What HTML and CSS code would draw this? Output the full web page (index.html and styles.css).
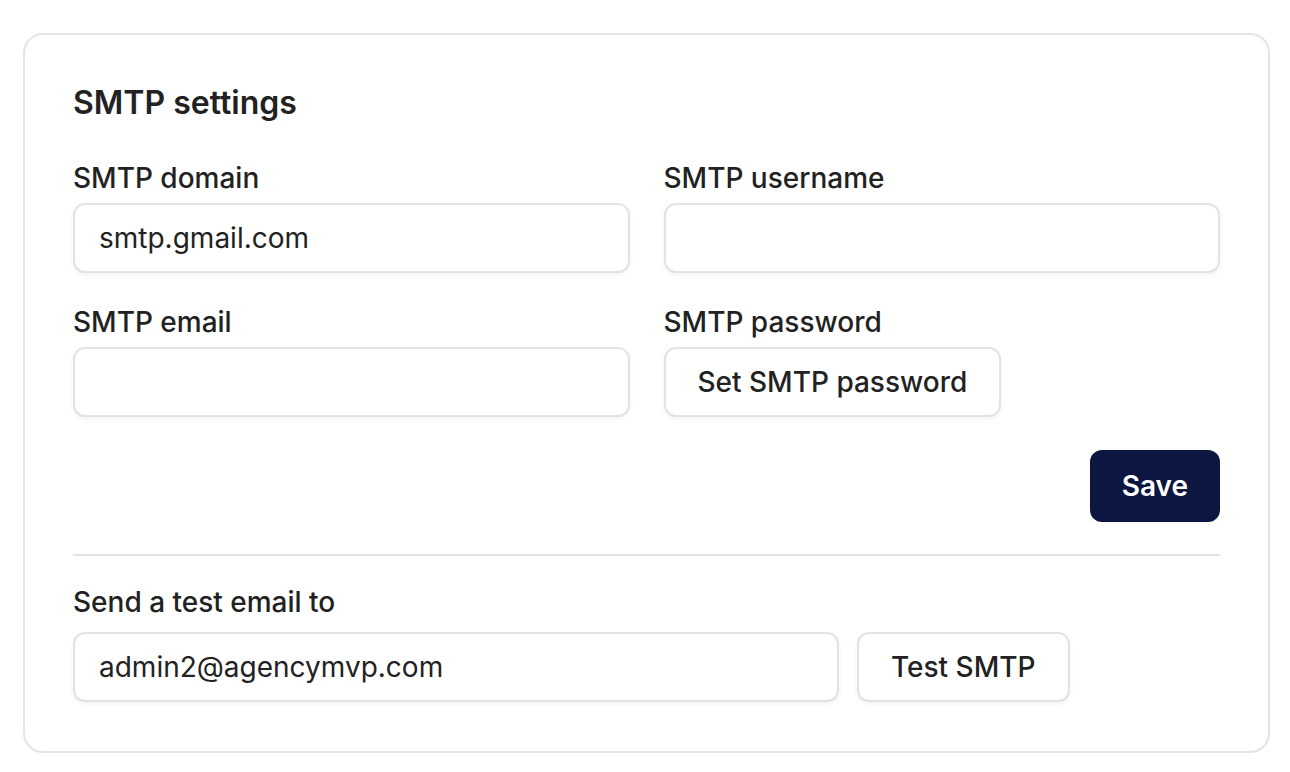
FILE: index.html
```html
<!DOCTYPE html>
<html lang="en">
<head>
<meta charset="utf-8">
<title>SMTP settings</title>
<link rel="stylesheet" href="styles.css">
</head>
<body>
<div class="page">
  <section class="card">
    <h2 class="title">SMTP settings</h2>
    <div class="grid">
      <div class="field">
        <label class="label">SMTP domain</label>
        <input class="input" type="text" value="smtp.gmail.com">
      </div>
      <div class="field">
        <label class="label">SMTP username</label>
        <input class="input" type="text" value="">
      </div>
      <div class="field">
        <label class="label">SMTP email</label>
        <input class="input" type="text" value="">
      </div>
      <div class="field">
        <label class="label">SMTP password</label>
        <div><button class="btn btn-outline" type="button">Set SMTP password</button></div>
      </div>
    </div>
    <div class="actions">
      <button class="btn btn-primary" type="button">Save</button>
    </div>
    <hr class="divider">
    <div class="field field-test">
      <label class="label">Send a test email to</label>
      <div class="test-row">
        <input class="input input-test" type="text" value="admin2@agencymvp.com">
        <button class="btn btn-outline" type="button">Test SMTP</button>
      </div>
    </div>
  </section>
</div>
</body>
</html>
```

FILE: styles.css
```css
* { box-sizing: border-box; }

html, body {
  margin: 0;
  padding: 0;
  background: #ffffff;
}

body {
  font-family: Inter, "Noto Sans", Arial, sans-serif;
  color: #222222;
}

.page {
  padding: 33px 21px 18px 23px;
}

.card {
  width: 1247px;
  border: 2px solid #e4e4e4;
  border-radius: 20px;
  padding: 48px 48px 49px 48px;
  background: #ffffff;
}

.title {
  margin: 0 0 37px 0;
  font-size: 32px;
  line-height: 40px;
  font-weight: 600;
  color: #222222;
}

.grid {
  display: grid;
  grid-template-columns: 1fr 1fr;
  column-gap: 34px;
  row-gap: 31px;
}

.field {
  display: flex;
  flex-direction: column;
  gap: 7px;
}

.field-test {
  gap: 12px;
}

.label {
  display: block;
  font-size: 28px;
  line-height: 36px;
  font-weight: 500;
  color: #222222;
}

.input {
  display: block;
  height: 70px;
  width: 100%;
  border: 2px solid #e3e3e3;
  border-radius: 12px;
  padding: 0 24px;
  font-family: inherit;
  font-size: 28px;
  color: #222222;
  background: #ffffff;
  box-shadow: 0 2px 4px rgba(0, 0, 0, 0.05);
  outline: none;
}

.btn {
  height: 70px;
  border-radius: 12px;
  font-family: inherit;
  font-size: 28px;
  font-weight: 500;
  cursor: pointer;
}

.btn-outline {
  padding: 0 32px;
  background: #ffffff;
  color: #222222;
  border: 2px solid #e3e3e3;
  box-shadow: 0 2px 4px rgba(0, 0, 0, 0.05);
}

.btn-primary {
  height: 72px;
  padding: 0 32px;
  background: #0c1640;
  color: #ffffff;
  border: none;
  font-weight: 600;
}

.actions {
  display: flex;
  justify-content: flex-end;
  margin-top: 33px;
}

.divider {
  border: none;
  border-top: 2px solid #e4e4e4;
  margin: 32px 0 28px 0;
}

.test-row {
  display: flex;
  gap: 18px;
}

.input-test {
  width: 766px;
}
```
